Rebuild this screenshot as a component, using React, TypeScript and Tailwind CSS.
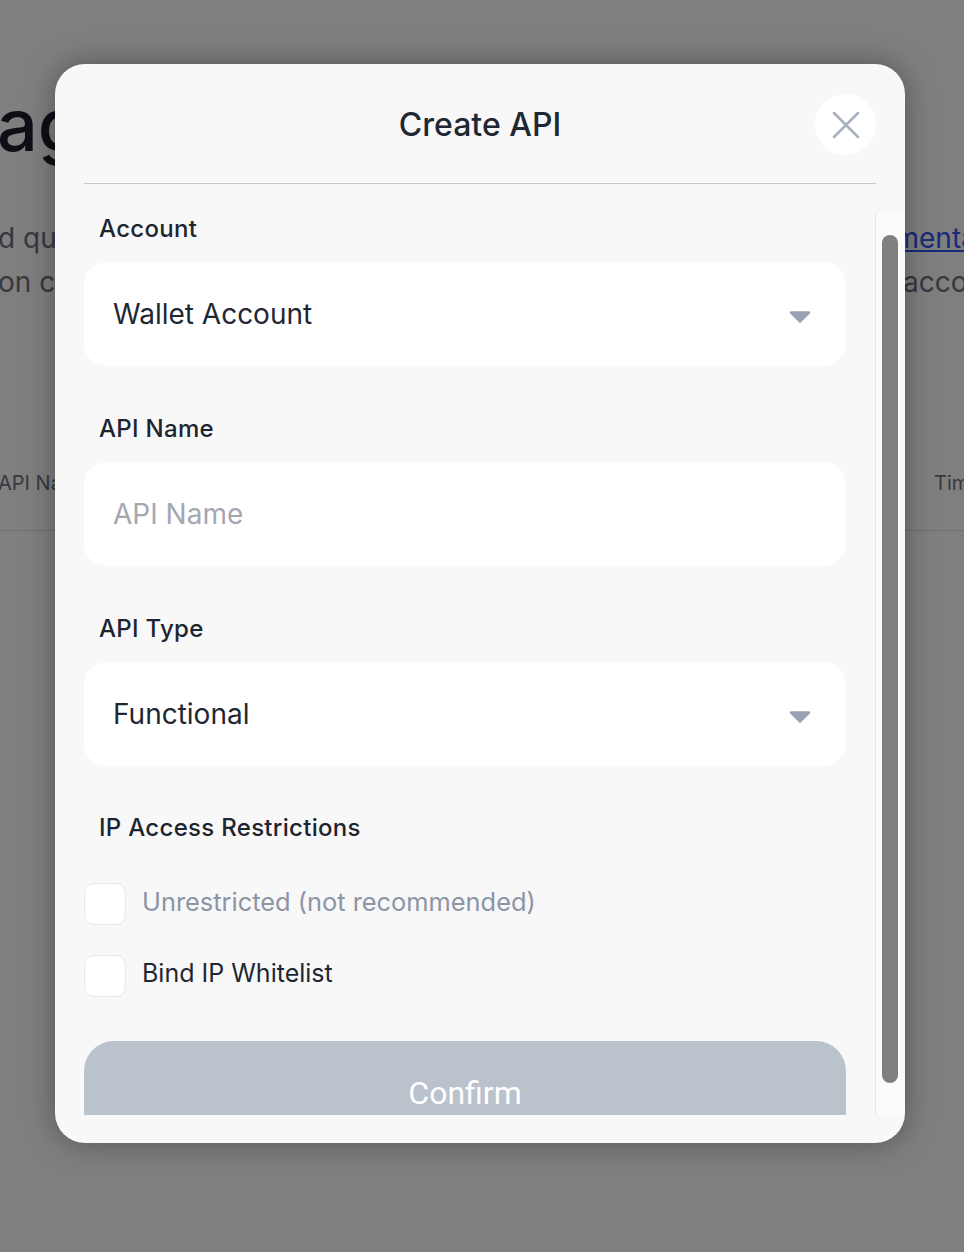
import React from "react";

function Caret() {
  return (
    <svg className="mt-[6px]" width="22" height="12" viewBox="0 0 22 12" fill="none">
      <path d="M2 1.5 H20 L11 10.5 Z" fill="#9aa3b1" stroke="#9aa3b1" strokeWidth="2.5" strokeLinejoin="round" />
    </svg>
  );
}

function Field({ label, children }: { label: string; children: React.ReactNode }) {
  return (
    <div className="flex flex-col">
      <div className="pl-[15px] h-[32px] leading-[32px] text-[24px] font-medium text-[#1d2530] tracking-[0.3px]">{label}</div>
      <div className="mt-[17px]">{children}</div>
    </div>
  );
}

function SelectBox({ value }: { value: string }) {
  return (
    <div className="h-[104px] rounded-[22px] bg-white flex items-center justify-between pl-[29px] pr-[35px]">
      <span className="text-[28px] text-[#1f2733]">{value}</span>
      <Caret />
    </div>
  );
}

export default function App() {
  return (
    <div className="relative w-full h-[1252px] overflow-hidden bg-white" style={{ fontFamily: "Inter, 'Noto Sans', sans-serif" }}>
      {/* background page */}
      <div className="flex flex-col whitespace-nowrap">
        <div className="mt-[85px] h-[80px] leading-[80px] text-[72px] font-medium text-[#1a1f2b] -ml-[153px]">Manage API Keys</div>
        <div className="mt-[51px] h-[44px] leading-[44px] text-[28px] flex">
          <div className="w-[828px] shrink-0 overflow-hidden text-[#6b7280]"><span className="-ml-[2px]">d query your API keys, see the</span></div>
          <span className="shrink-0 text-[#3354ee] underline">documentation</span>
        </div>
        <div className="h-[44px] leading-[44px] text-[28px] flex">
          <div className="w-[903px] shrink-0 overflow-hidden text-[#6b7280]"><span className="-ml-[2px]">on creating keys for your</span></div>
          <span className="shrink-0 text-[#6b7280]">account</span>
        </div>
        <div className="mt-[165px] h-[62px] flex border-b border-[#e0e0e0] text-[20px] text-[#6b7280]">
          <div className="w-[934px] shrink-0 h-[28px] leading-[28px] overflow-hidden"><span className="-ml-[2px]">API Name</span></div>
          <span className="shrink-0 h-[28px] leading-[28px]">Time</span>
        </div>
      </div>

      {/* overlay */}
      <div className="absolute inset-0 bg-black/50 flex justify-start items-start pt-[64px] pl-[55px]">
        <div className="w-[850px] h-[1079px] rounded-[30px] bg-[#f8f8f8] shadow-[0_0_30px_rgba(0,0,0,0.35)] flex flex-col overflow-hidden">
          <div className="relative mx-[29px] h-[120px] border-b border-[#c3c9d2] flex items-center justify-center">
            <h2 className="mt-[3px] text-[32px] font-medium text-[#1f2733]">Create API</h2>
            <button className="absolute right-0 top-[30px] w-[61px] h-[61px] rounded-full bg-white flex items-center justify-center">
              <svg width="28" height="28" viewBox="0 0 28 28" fill="none">
                <path d="M2 2 L26 26 M26 2 L2 26" stroke="#a8b0bd" strokeWidth="2.6" strokeLinecap="round" />
              </svg>
            </button>
          </div>

          <div className="flex pl-[29px] pt-[29px] gap-[29px]">
            <div className="w-[762px] h-[902px] overflow-hidden flex flex-col">
              <Field label="Account">
                <SelectBox value="Wallet Account" />
              </Field>
              <div className="mt-[47px]">
                <Field label="API Name">
                  <div className="h-[104px] rounded-[22px] bg-white flex items-center pl-[29px]">
                    <span className="text-[28px] text-[#a3a8b0]">API Name</span>
                  </div>
                </Field>
              </div>
              <div className="mt-[47px]">
                <Field label="API Type">
                  <SelectBox value="Functional" />
                </Field>
              </div>
              <div className="mt-[46px] pl-[15px] h-[32px] leading-[32px] text-[24px] font-medium text-[#1d2530] tracking-[0.3px]">IP Access Restrictions</div>
              <div className="mt-[39px] flex items-center gap-[16px]">
                <div className="w-[42px] h-[42px] shrink-0 rounded-[10px] bg-white border border-[#e6e8eb]" />
                <span className="pb-[4px] text-[25.4px] text-[#8b95a5]">Unrestricted (not recommended)</span>
              </div>
              <div className="mt-[30px] flex items-center gap-[16px]">
                <div className="w-[42px] h-[42px] shrink-0 rounded-[10px] bg-white border border-[#e6e8eb]" />
                <span className="pb-[4px] text-[25px] text-[#1f2733]">Bind IP Whitelist</span>
              </div>
              <button
                className="mt-[44px] shrink-0 h-[104px] rounded-[30px] bg-[#bac2cc] text-white text-[32px] flex items-center justify-center"
                style={{ fontFamily: "Roboto, 'Liberation Sans', sans-serif" }}
              >
                Confirm
              </button>
            </div>
            <div className="w-[29px] h-[902px] border-l border-[#e6e6e6] bg-[#fbfbfb] flex justify-center">
              <div className="mt-[22px] w-[16px] h-[848px] rounded-full bg-[#808080]" />
            </div>
          </div>
        </div>
      </div>
    </div>
  );
}
